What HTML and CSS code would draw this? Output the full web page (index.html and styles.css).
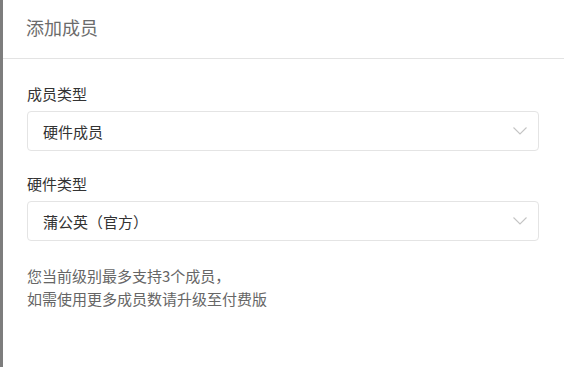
FILE: index.html
```html
<!DOCTYPE html>
<html lang="zh">
<head>
<meta charset="utf-8">
<link rel="stylesheet" href="styles.css">
</head>
<body>
<div class="page">
  <div class="panel">
    <div class="header">添加成员</div>
    <div class="content">
      <div class="field">
        <div class="label">成员类型</div>
        <div class="select">
          <span class="value">硬件成员</span>
          <svg class="chev" width="14" height="8" viewBox="0 0 14 8"><path d="M0.5 0.5 L7 7 L13.5 0.5" fill="none" stroke="#c4c4c4" stroke-width="1.1"/></svg>
        </div>
      </div>
      <div class="field">
        <div class="label">硬件类型</div>
        <div class="select">
          <span class="value">蒲公英（官方）</span>
          <svg class="chev" width="14" height="8" viewBox="0 0 14 8"><path d="M0.5 0.5 L7 7 L13.5 0.5" fill="none" stroke="#c4c4c4" stroke-width="1.1"/></svg>
        </div>
      </div>
      <div class="note">您当前级别最多支持3个成员，<br>如需使用更多成员数请升级至付费版</div>
    </div>
  </div>
</div>
</body>
</html>
```
FILE: styles.css
```css
html, body {
  margin: 0;
  padding: 0;
  background: #ffffff;
}
body {
  font-family: "Noto Sans CJK SC", "Noto Sans", sans-serif;
  width: 564px;
  height: 367px;
  overflow: hidden;
}
.page {
  display: flex;
  height: 367px;
  border-left: 3px solid #7d7d7d;
  box-sizing: border-box;
}
.panel {
  flex: 1;
  background: #fff;
}
.header {
  height: 59px;
  box-sizing: border-box;
  padding: 15px 23px 0;
  font-size: 18px;
  line-height: 24px;
  color: #6b6b6b;
  border-bottom: 1px solid #e3e3e3;
}
.content {
  padding: 25px 25px 0 24px;
}
.field {
  margin-bottom: 23px;
}
.label {
  font-size: 15px;
  line-height: 20px;
  color: #333;
  margin-bottom: 7px;
}
.select {
  height: 40px;
  box-sizing: border-box;
  border: 1px solid #e4e4e4;
  border-radius: 4px;
  display: flex;
  align-items: center;
  justify-content: space-between;
  padding: 0 11px 0 15px;
}
.value {
  font-size: 15px;
  color: #333;
}
.chev {
  display: block;
}
.note {
  font-size: 15px;
  line-height: 23px;
  color: #666;
}
```
